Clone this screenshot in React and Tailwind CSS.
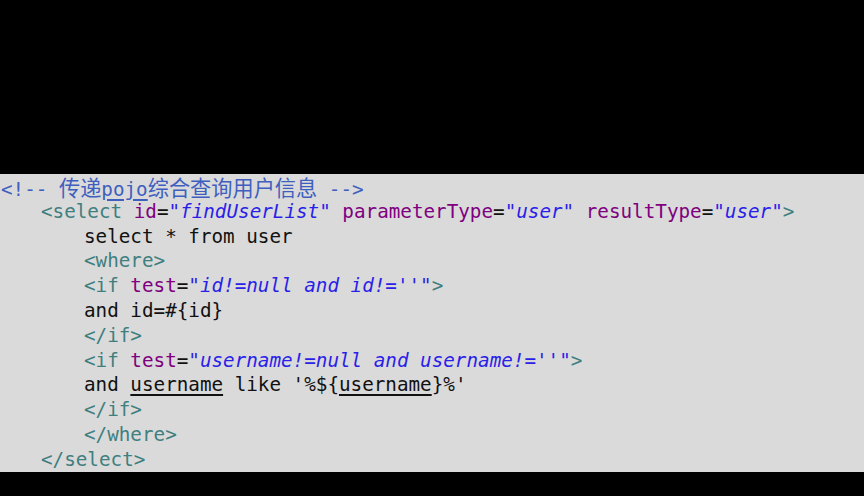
import React from "react";

const tag = "text-[#3f7f7f]";
const attr = "text-[#7f007f]";
const val = "text-[#2a1fe8] italic";
const cmt = "text-[#3f5fbf]";
const cjk = "text-[21.2px] [font-family:'Noto_Sans_CJK_SC',sans-serif]";

const Line = ({ indent = 0, children }) => {
  const pad = indent === 0 ? "pl-[1px]" : indent === 1 ? "pl-[41px]" : "pl-[84px]";
  return <div className={`${pad} h-[24.8px] whitespace-pre`}>{children}</div>;
};

const App = () => {
  return (
    <div className="w-[864px] h-[496px] bg-black flex flex-col overflow-hidden">
      <div className="h-[174px] shrink-0" />
      <div className="h-[298px] shrink-0 pt-[1px] bg-[#dadada] text-[#111] text-[19.25px] leading-[24.8px] [font-family:'DejaVu_Sans_Mono','Liberation_Mono','Noto_Sans_CJK_SC',monospace]">
        <Line>
          <span className={cmt}>
            {"<!-- "}
            <span className={cjk}>传递</span>
            <span className="underline underline-offset-[3px] decoration-2">pojo</span>
            <span className={cjk}>综合查询用户信息</span>
            {" -->"}
          </span>
        </Line>
        <Line indent={1}>
          <span className={tag}>{"<select "}</span>
          <span className={attr}>id</span>=<span className={val}>"findUserList"</span>{" "}
          <span className={attr}>parameterType</span>=<span className={val}>"user"</span>{" "}
          <span className={attr}>resultType</span>=<span className={val}>"user"</span>
          <span className={tag}>{">"}</span>
        </Line>
        <Line indent={2}>select * from user</Line>
        <Line indent={2}>
          <span className={tag}>{"<where>"}</span>
        </Line>
        <Line indent={2}>
          <span className={tag}>{"<if "}</span>
          <span className={attr}>test</span>=<span className={val}>"id!=null and id!=''"</span>
          <span className={tag}>{">"}</span>
        </Line>
        <Line indent={2}>{"and id=#{id}"}</Line>
        <Line indent={2}>
          <span className={tag}>{"</if>"}</span>
        </Line>
        <Line indent={2}>
          <span className={tag}>{"<if "}</span>
          <span className={attr}>test</span>=<span className={val}>"username!=null and username!=''"</span>
          <span className={tag}>{">"}</span>
        </Line>
        <Line indent={2}>
          {"and "}
          <span className="underline underline-offset-[3px] decoration-2">username</span>
          {" like '%${"}
          <span className="underline underline-offset-[3px] decoration-2">username</span>
          {"}%'"}
        </Line>
        <Line indent={2}>
          <span className={tag}>{"</if>"}</span>
        </Line>
        <Line indent={2}>
          <span className={tag}>{"</where>"}</span>
        </Line>
        <Line indent={1}>
          <span className={tag}>{"</select>"}</span>
        </Line>
      </div>
    </div>
  );
};

export default App;
